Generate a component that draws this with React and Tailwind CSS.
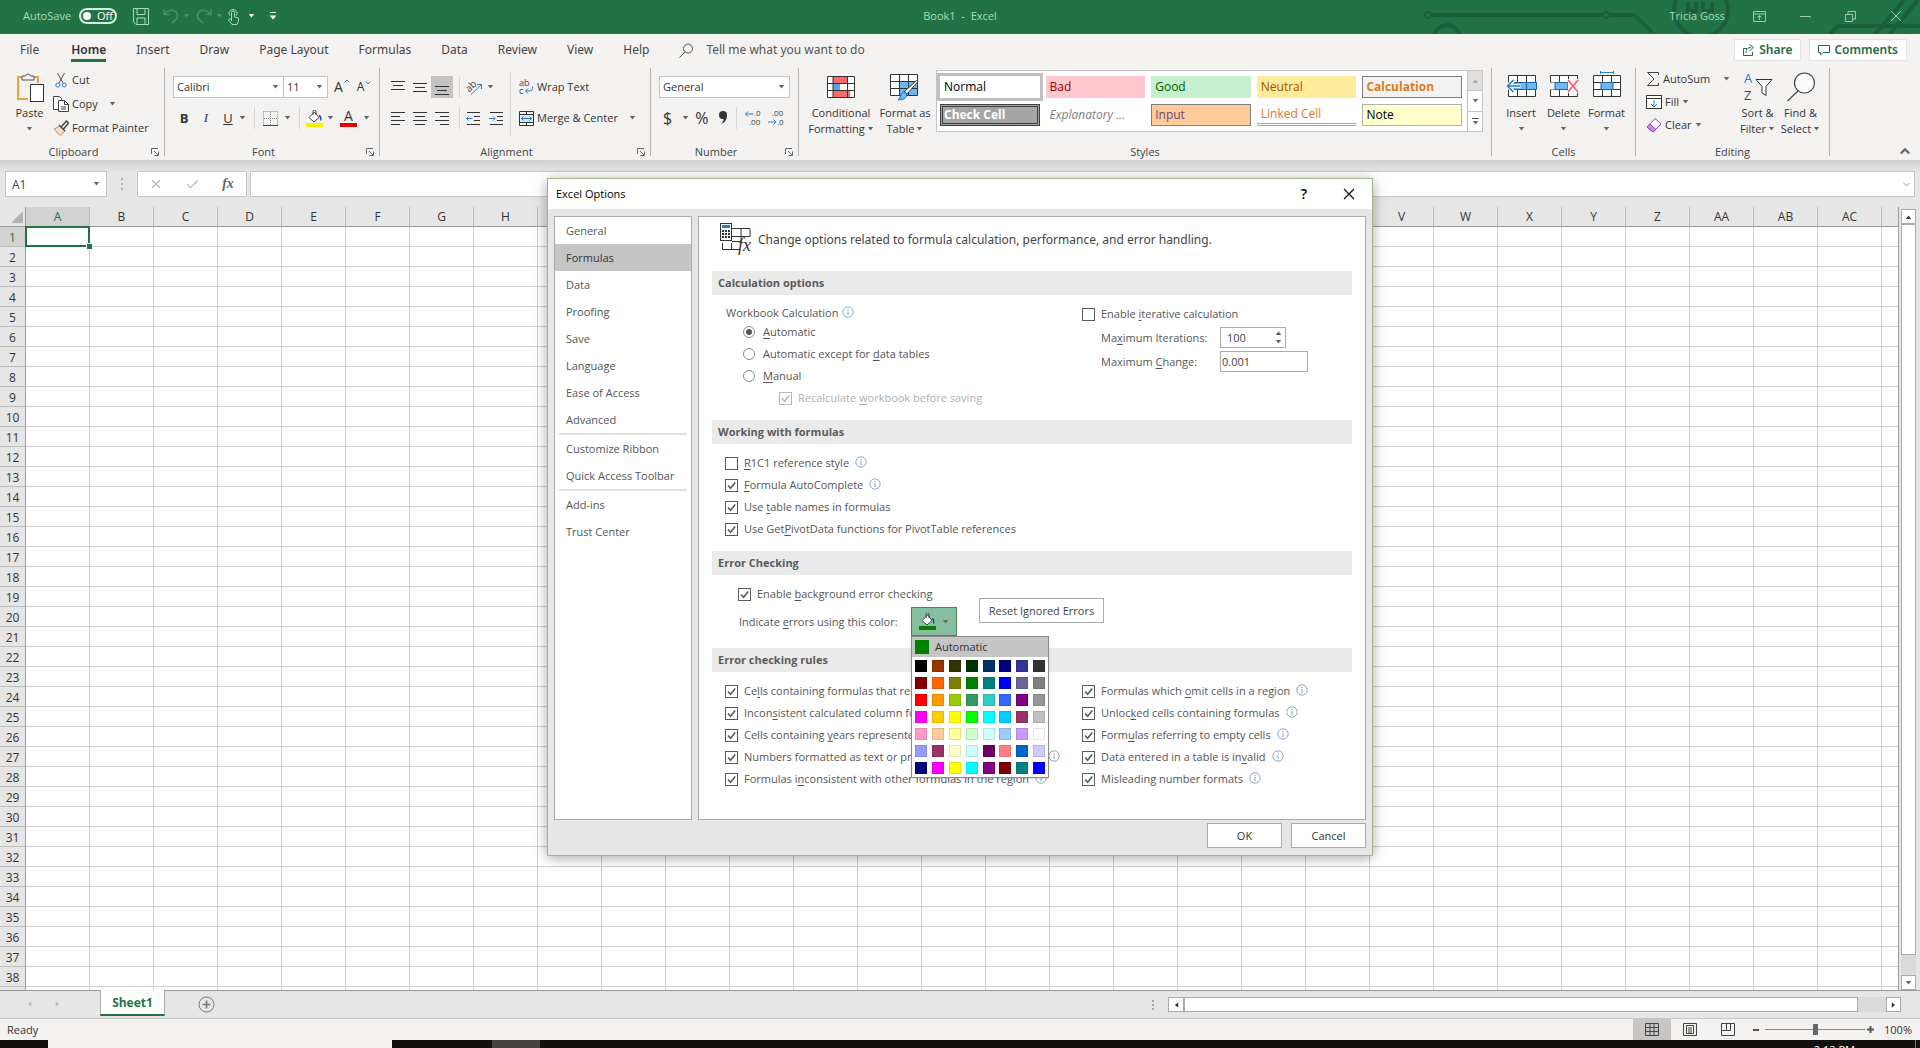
import React, { useState } from "react";
import { X, Check, ChevronUp, ChevronDown } from "lucide-react";

const columns = [
  "A", "B", "C", "D", "E", "F", "G", "H", "I", "J", "K", "L", "M", "N", "O",
  "P", "Q", "R", "S", "T", "U", "V", "W", "X", "Y", "Z", "AA", "AB", "AC",
];

const rows = Array.from({ length: 39 }, (_, i) => i + 1);

const tabs = ["File", "Home", "Insert", "Draw", "Page Layout", "Formulas", "Data", "Review", "View", "Help"];

const cellStyles = [
  { name: "Normal", cls: "pl-1 bg-white text-black outline-3 outline-[#c0c0c0]" },
  { name: "Bad", cls: "pl-1 bg-[#ffc7ce] text-[#9c0006]" },
  { name: "Good", cls: "pl-1 bg-[#c6efce] text-[#006100]" },
  { name: "Neutral", cls: "pl-1 bg-[#ffeb9c] text-[#9c5700]" },
  { name: "Calculation", cls: "pl-[3px] bg-[#f2f2f2] text-[#e07b1a] font-bold border border-[#7f7f7f]" },
  { name: "Check Cell", cls: "pl-px bg-[#a5a5a5] text-white font-bold border-3 border-double border-[#3f3f3f]" },
  { name: "Explanatory ...", cls: "pl-1 bg-white text-[#7f7f7f] italic" },
  { name: "Input", cls: "pl-[3px] bg-[#ffcc99] text-[#5f4a76] border border-[#7f7f7f]" },
  { name: "Linked Cell", cls: "pl-1 bg-white text-[#e07b1a] border-b-3 border-double border-[#f0962e]" },
  { name: "Note", cls: "pl-[3px] bg-[#ffffcc] text-black border border-[#b2b2b2]" },
];

const colors = [
  "#000000", "#993300", "#333300", "#003300", "#003366", "#000080", "#333399", "#333333",
  "#800000", "#ff6600", "#808000", "#008000", "#008080", "#0000ff", "#666699", "#808080",
  "#ff0000", "#ff9900", "#99cc00", "#339966", "#33cccc", "#3366ff", "#800080", "#969696",
  "#ff00ff", "#ffcc00", "#ffff00", "#00ff00", "#00ffff", "#00ccff", "#993366", "#c0c0c0",
  "#ff99cc", "#ffcc99", "#ffff99", "#ccffcc", "#ccffff", "#99ccff", "#cc99ff", "#ffffff",
  "#9999ff", "#993366", "#ffffcc", "#ccffff", "#660066", "#ff8080", "#0066cc", "#ccccff",
  "#000080", "#ff00ff", "#ffff00", "#00ffff", "#800080", "#800000", "#008080", "#0000ff",
];

/* ---------- small pieces ---------- */

const Caret = ({ className = "text-[#666]" }) => (
  <svg width="7" height="4" viewBox="0 0 7 4" className={`shrink-0 ${className}`}>
    <path d="M0.800 0h5.400L3.500 3.600z" fill="currentColor" />
  </svg>
);

const Info = () => (
  <svg width="12" height="12" viewBox="0 0 12 12" className="shrink-0 mb-0.5" fill="none" stroke="#7f9ccb">
    <circle cx="6" cy="6" r="5.2" strokeWidth="0.9" />
    <path d="M6 5v4M6 2.8v1.2" />
  </svg>
);

// "&" marks the access key, the letter after it gets the underline
const Label = ({ text }) => {
  const i = text.indexOf("&");
  if (i < 0) return <span>{text}</span>;
  return (
    <span className="whitespace-nowrap">
      {text.slice(0, i)}
      <span className="underline underline-offset-2">{text[i + 1]}</span>
      {text.slice(i + 2)}
    </span>
  );
};

const CheckRow = ({ text, checked = false, info, disabled }) => (
  <div className="flex items-center h-[22px] gap-1.5">
    <label className={`flex items-center gap-1.5 ${disabled ? "text-[#b0b0b0]" : ""}`}>
      <span className="relative flex">
        <input
          type="checkbox"
          defaultChecked={checked}
          disabled={disabled}
          className="peer appearance-none size-[13px] bg-white border border-[#5a5a5a] disabled:border-[#b8b8b8]"
        />
        <svg
          viewBox="0 0 13 13"
          className="absolute inset-0 size-[13px] pointer-events-none hidden peer-checked:block"
          fill="none"
          stroke={disabled ? "#b8b8b8" : "#5a5a5a"}
          strokeWidth="1.6"
        >
          <path d="M3 6.5l2.6 2.8L10.2 3.4" />
        </svg>
      </span>
      <Label text={text} />
    </label>
    {info && <Info />}
  </div>
);

const RadioRow = ({ text, checked = false }) => (
  <label className="flex items-center h-[22px] gap-2 pl-[17px]">
    <input
      type="radio"
      name="calc"
      defaultChecked={checked}
      className="appearance-none size-3 rounded-full border border-[#8a8a8a] p-[2px] bg-clip-content checked:bg-[#555]"
    />
    <Label text={text} />
  </label>
);

const SectionTitle = ({ children }) => (
  <h2 className="h-6 bg-[#eaeaea] pl-1.5 flex items-center font-bold text-[#5a5a5a]">{children}</h2>
);

const Sep = () => <div className="w-px h-[88px] bg-[#b4b2b0] shrink-0" />;

const Launcher = () => (
  <button aria-label="More options" className="text-[#666]">
    <svg width="8" height="8" viewBox="0 0 8 8" fill="none" stroke="currentColor">
      <path d="M0.5 6V0.5H7M3 3l4 4M7.5 3.5v4h-4" />
    </svg>
  </button>
);

const Group = ({ label, launcher, className, children }) => (
  <>
    <section className={`flex flex-col shrink-0 h-[92px] ${className}`}>
      <div className="h-[76px] flex">{children}</div>
      <div className="h-4 flex items-center text-[#444]">
        <span className="flex-1 text-center">{label}</span>
        {launcher && (
          <span className="w-[17px] flex items-center pl-1">
            <Launcher />
          </span>
        )}
      </div>
    </section>
    <Sep />
  </>
);

const BigButton = ({ icon, lines, caretBelow, className }) => (
  <button className={`flex flex-col items-center shrink-0 ${className}`}>
    <span className="h-[37px] flex items-center justify-center">{icon}</span>
    <span className="leading-4">{lines[0]}</span>
    <span className="h-4 flex items-center gap-0.5 leading-4">
      {!caretBelow && lines[1]}
      <Caret />
    </span>
  </button>
);

const Lines = ({ d, active }) => (
  <button className={`w-[22px] h-[22px] flex items-center justify-center ${active ? "bg-[#c5c3c1]" : ""}`}>
    <svg width="14" height="15" viewBox="0 0 14 15" stroke="#333" fill="none">
      <path d={d} />
    </svg>
  </button>
);

const Combo = ({ label, value, className }) => (
  <div className={`relative h-[22px] bg-white border border-[#c6c4c2] ${className}`}>
    <select aria-label={label} className="appearance-none w-full h-full pl-[3px] pr-3 outline-none">
      <option>{value}</option>
    </select>
    <span className="absolute right-1 inset-y-0 flex items-center pointer-events-none">
      <Caret />
    </span>
  </div>
);

/* ---------- icons ---------- */

const PasteIcon = () => (
  <svg width="28" height="30" viewBox="0 0 28 30" fill="none">
    <path d="M12 27H2V5h20v6" stroke="#e8a33d" strokeWidth="2" />
    <path d="M6 8V4h3.5a2.6 2.6 0 0 1 5 0H18v4z" fill="#f3f2f1" stroke="#555" />
    <rect x="14.500" y="12.500" width="13" height="17" fill="#fff" stroke="#333" />
  </svg>
);

const CutIcon = () => (
  <svg width="16" height="16" viewBox="0 0 16 16" fill="none">
    <path d="M4.500 1l5.500 10M11.500 1L6 11" stroke="#555" />
    <circle cx="4.800" cy="13" r="2" stroke="#2b7cd3" />
    <circle cx="11.200" cy="13" r="2" stroke="#2b7cd3" />
  </svg>
);

const CopyIcon = () => (
  <svg width="16" height="16" viewBox="0 0 16 16" fill="#fff" stroke="#444">
    <path d="M5.500 13.500h-5V.5h6l2 2V5" />
    <path d="M5.500 4.500h6l4 4v7h-10z" />
    <path d="M11.500 4.500v4h4M8 11h5M8 13h5" fill="none" />
  </svg>
);

const PainterIcon = () => (
  <svg width="16" height="16" viewBox="0 0 16 16" fill="none">
    <path d="M1 9l6-3 5 5-5 4.500C5 13 3 11 1 9z" fill="#fbe0c8" stroke="#e0803a" />
    <path d="M6 5l6 6M8 7l5.500-6 2 2L10.500 9" stroke="#444" strokeWidth="1.400" />
  </svg>
);

const BordersIcon = () => (
  <svg width="15" height="15" viewBox="0 0 15 15" fill="none" stroke="#888" strokeDasharray="1 1">
    <path d="M.5.5h14v14M.5.5v14M7.500 1v13M1 7.500h13" />
    <path d="M0 14.500h15" stroke="#444" strokeDasharray="none" />
  </svg>
);

const FillIcon = ({ color = "#ffee00" }) => (
  <svg width="17" height="17" viewBox="0 0 17 17" fill="none">
    <path d="M3 7.500L8.500 2l4.500 5.500L8 12z" fill="#fff" stroke="#444" />
    <path d="M7 5V1.500a1.500 1.500 0 0 1 3 0V5" stroke="#444" />
    <path d="M13 5.500c1.500.5 2 2.500 1.500 5" stroke="#1e4e9c" strokeWidth="1.500" />
    <rect y="13" width="17" height="4" fill={color} />
  </svg>
);

const OrientIcon = () => (
  <svg width="17" height="17" viewBox="0 0 17 17" fill="none" className="overflow-visible">
    <text x="0" y="10" fontSize="10" fill="#444" transform="rotate(-45 6 8)">ab</text>
    <path d="M5 15.500L15 6M11 5.500h4.500V10" stroke="#2b7cd3" />
  </svg>
);

const WrapIcon = () => (
  <svg width="15" height="16" viewBox="0 0 15 16" fill="none" className="overflow-visible">
    <text x="0" y="7" fontSize="9" fill="#444">ab</text>
    <text x="0" y="15" fontSize="9" fill="#444">c</text>
    <path d="M13.500 7.500v2a2.500 2.500 0 0 1-2.500 2.500H6.500M9 9.500L6.500 12 9 14.500" stroke="#2b7cd3" />
  </svg>
);

const MergeIcon = () => (
  <svg width="15" height="15" viewBox="0 0 15 15" fill="none">
    <path d="M.5.500h14v14H.500zM7.500.500v3M7.500 11.500v3M.500 3.500h14M.500 11.500h14" stroke="#333" />
    <rect x="1" y="4" width="13" height="7" fill="#d6ebff" />
    <path d="M2.500 7.500h10M4.500 5.500l-2 2 2 2M10.500 5.500l2 2-2 2" stroke="#1f6fc4" />
  </svg>
);

const IndentIcon = ({ flip }) => (
  <svg width="15" height="15" viewBox="0 0 15 15" fill="none">
    <path d="M1 1.500h13M8 5.500h6M8 9.500h6M1 13.500h13" stroke="#333" />
    <path d={flip ? "M0 7.500h6M4 5.500l2 2-2 2" : "M0.500 7.500h6M2.500 5.500l-2 2 2 2"} stroke="#2b7cd3" />
  </svg>
);

const DecimalIcon = ({ less }) => (
  <svg width="17" height="16" viewBox="0 0 17 16" fill="none" fontSize="8" className="overflow-visible">
    <text x={less ? "4" : "9"} y="6" fill="#444">{less ? ".00" : ".0"}</text>
    <text x={less ? "9" : "4"} y="15" fill="#444">{less ? ".0" : ".00"}</text>
    <path d={less ? "M0 12h8M5.500 9.500L8 12l-2.500 2.500" : "M0.500 4h8M3 1.500L.5 4 3 6.500"} stroke="#1f84c8" />
  </svg>
);

const CondIcon = () => (
  <svg width="28" height="24" viewBox="0 0 28 24" fill="none">
    <rect x=".5" y="1.500" width="27" height="21" fill="#fff" />
    <rect x="6" y="2" width="14" height="7" fill="#f8696b" />
    <rect x="6" y="9" width="7" height="7" fill="#5aa5ea" />
    <rect x="6" y="16" width="17" height="6" fill="#f8696b" />
    <path d="M.5 1.500h27v21H.5zM.5 8.500h27M.5 15.500h27M6 1.500v21M20.500 1.500v21" stroke="#333" />
  </svg>
);

const TableIcon = () => (
  <svg width="30" height="28" viewBox="0 0 30 28" fill="none">
    <rect x=".5" y="1.500" width="27" height="21" fill="#fff" />
    <rect x="9" y="9" width="18" height="14" fill="#6cb8f6" />
    <path d="M.5 1.500h27v21H.5zM.5 8.500h27M.5 15.500h27M9.500 1.500v21M18.500 1.500v21" stroke="#333" />
    <path d="M28 8.500L17 21l-3-2L26.500 7.500z" fill="#fff" stroke="#333" />
    <path d="M16.500 20.500c1 5-4 7-8.500 6 3-1 2-6 5.500-7.500z" fill="#6cb8f6" stroke="#1f6fc4" />
  </svg>
);

const CellsIcon = ({ kind }) => (
  <svg width="31" height="28" viewBox="0 0 31 28" fill="none" className="mb-1">
    <path d="M2.500 4.500h27v21h-27zM2.500 11.500h27M2.500 18.500h27M11.500 4.500v21M20.500 4.500v21" stroke="#333" fill="#fff" />
    {kind === "insert" && (
      <>
        <path d="M8 11.500h22.500v7H8zM20.500 11.500v7" fill="#6cb8f6" stroke="#1f5f9c" />
        <path d="M1.500 15h13M8 9l-6.500 6L8 21" stroke="#f3f2f1" strokeWidth="4" />
        <path d="M1 15h13M7.500 9L1.500 15l6 6" stroke="#1f84c8" strokeWidth="1.500" />
      </>
    )}
    {kind === "delete" && (
      <>
        <path d="M2 11.500h5v7H2z" fill="#f3f2f1" />
        <path d="M7 11.500h13v7H7z" fill="#6cb8f6" stroke="#1f5f9c" />
        <path d="M20 8h11v14H20z" fill="#f3f2f1" />
        <path d="M20 9l10 12M30 9L20 21" stroke="#f0606a" strokeWidth="1.500" />
      </>
    )}
    {kind === "format" && (
      <>
        <path d="M10 11.500h12v7H10z" fill="#6cb8f6" stroke="#1f5f9c" />
        <path d="M9 1.500h14M9.500 0v3M22.500 0v3" stroke="#1f84c8" />
      </>
    )}
  </svg>
);

const SigmaIcon = () => (
  <svg width="14" height="14" viewBox="0 0 14 14" fill="none" stroke="#444">
    <path d="M12.500 3V.5h-11L8 7l-6.500 6.500h11V11" />
  </svg>
);

const DownBoxIcon = () => (
  <svg width="16" height="14" viewBox="0 0 16 14" fill="none">
    <rect x=".5" y=".5" width="15" height="13" fill="#fff" stroke="#333" />
    <path d="M1 3.500h14" stroke="#333" />
    <path d="M8 5v6.500M5 9l3 3 3-3" stroke="#1f84c8" />
  </svg>
);

const EraserIcon = () => (
  <svg width="16" height="15" viewBox="0 0 16 15" fill="#fff" stroke="#8c3fa8">
    <path d="M1 9l8-8.500L15 6 7 14z" />
    <path d="M1 9l3-3 6 5.500L7 14z" fill="#d68be0" />
  </svg>
);

const SortIcon = () => (
  <svg width="30" height="28" viewBox="0 0 30 28" fill="none" className="overflow-visible">
    <text x="1" y="10" fontSize="13" fill="#2b7cd3">A</text>
    <text x="1" y="27" fontSize="13" fill="#444">Z</text>
    <path d="M13 6.500h16l-6 7v9l-4-2.500v-6.500z" stroke="#333" fill="#fff" />
  </svg>
);

const FindIcon = () => (
  <svg width="30" height="30" viewBox="0 0 30 30" fill="none" stroke="#444" strokeWidth="1.200">
    <circle cx="18.500" cy="11" r="10" fill="#fafafa" />
    <path d="M12 19L1.500 29" />
  </svg>
);

const CalcHeaderIcon = () => (
  <svg width="32" height="34" viewBox="0 0 32 34" fill="none" stroke="#333" className="overflow-visible">
    <path d="M12 5.500h18v8H12M21 5.500V18M12 18.500h9M2.500 20v6.500H20M11.500 20v6" />
    <rect x=".5" y=".5" width="11" height="17" fill="#fff" />
    <rect x="2" y="2" width="8" height="3" fill="#2b7cd3" stroke="none" />
    <path d="M2 8h2M5 8h2M8 8h2M2 11h2M5 11h2M8 11h2M2 14h2M5 14h2M8 14h2" strokeWidth="1.800" />
    <text x="18" y="28" fontSize="18" fontStyle="italic" fill="#333" stroke="none" className="font-['Liberation_Serif',serif]">fx</text>
  </svg>
);

/* ---------- page parts ---------- */

const TitleBar = () => (
  <header className="relative h-[34px] pb-0.5 shrink-0 bg-[#217346] text-[#a9dcbc] flex items-center justify-between">
    <svg width="500" height="34" viewBox="0 0 500 34" className="absolute right-0 top-0" fill="none" stroke="#1a5f39" strokeWidth="4">
      <circle cx="8" cy="15" r="3" strokeWidth="2" />
      <path d="M12 15h170" />
      <circle cx="186" cy="15" r="3" strokeWidth="2" />
      <path d="M190 15h24l18 17M410 34l8-8h82M455 34L484 0M470 34L498 0" />
      <circle cx="27" cy="38" r="13" />
      <circle cx="281" cy="10" r="27" />
      <path d="M268 2v9h8V2M283 2v9h9V2" />
    </svg>
    <div className="relative flex items-center pl-[23px]">
      <span>AutoSave</span>
      <button className="ml-2 w-[38px] h-4 rounded-full border-2 border-[#d5efdd] flex items-center gap-1.5 pl-0.5 text-white">
        <span className="size-2 rounded-full bg-white" />
        Off
      </button>
      <button aria-label="Save" className="ml-4">
        <svg width="16" height="17" viewBox="0 0 16 17" fill="none" stroke="#a9dcbc">
          <path d="M.5.5h15v16H3L.5 14zM4 .5v6h8v-6M4 16.500V10h8v6.500" />
        </svg>
      </button>
      <button aria-label="Undo" className="ml-3.5 flex items-center gap-1 text-[#439467]">
        <svg width="16" height="16" viewBox="0 0 16 16" fill="none" stroke="currentColor" strokeWidth="1.500">
          <path d="M1 1v5.500h5.500M1.500 6C5 1.500 12 1 14 5.500s-2 7-5 9.500" />
        </svg>
        <Caret className="text-[#439467]" />
      </button>
      <button aria-label="Redo" className="ml-1.5 flex items-center gap-1 text-[#439467]">
        <svg width="16" height="16" viewBox="0 0 16 16" fill="none" stroke="currentColor" strokeWidth="1.500">
          <path d="M15 1v5.500H9.500M14.500 6C11 1.500 4 1 2 5.500s2 7 5 9.500" />
        </svg>
        <Caret className="text-[#439467]" />
      </button>
      <button aria-label="Touch mode" className="ml-1 flex items-center gap-2">
        <svg width="13" height="17" viewBox="0 0 13 17" fill="none" stroke="#a9dcbc">
          <path d="M4.500 13V4.500a1.500 1.500 0 0 1 3 0V9l4 1v3l-1.500 3.500H5L1.500 12l1.500-1.500L4.500 12M2.500 7.500a4 4 0 1 1 7 0" />
        </svg>
        <Caret className="text-white" />
      </button>
      <button aria-label="Customize toolbar" className="ml-3.5">
        <svg width="8" height="8" viewBox="0 0 8 8">
          <path d="M1 .5h6" stroke="#fff" />
          <path d="M.5 3.500h7L4 7.500z" fill="#fff" />
        </svg>
      </button>
    </div>
    <h1 className="absolute inset-x-0 text-center pointer-events-none">Book1&nbsp; -&nbsp; Excel</h1>
    <div className="relative flex items-center pr-[18px]">
      <span className="mr-7">Tricia Goss</span>
      <div className="flex items-center gap-[34px] text-[#9cc9ad]">
        <button aria-label="Ribbon display options">
          <svg width="13" height="11" viewBox="0 0 13 11" fill="none" stroke="currentColor">
            <path d="M.5.500h12v10H.500zM.5 3h12M6.500 9V5M4.500 6.500l2-2 2 2" />
          </svg>
        </button>
        <button aria-label="Minimize">
          <svg width="11" height="11" viewBox="0 0 11 11" stroke="currentColor"><path d="M0 5.500h11" /></svg>
        </button>
        <button aria-label="Restore">
          <svg width="11" height="11" viewBox="0 0 11 11" fill="none" stroke="currentColor">
            <path d="M.5 3.500h7v7h-7zM3 3V.500h7.500V8H8" />
          </svg>
        </button>
        <button aria-label="Close">
          <svg width="12" height="12" viewBox="0 0 12 12" stroke="currentColor"><path d="M1 1l10 10M11 1L1 11" /></svg>
        </button>
      </div>
    </div>
  </header>
);

const TabBar = () => (
  <nav className="h-8 shrink-0 bg-[#f3f2f1] flex items-center pl-5 text-xs text-[#444] font-['Noto_Sans','Open_Sans',sans-serif]">
    <div className="flex items-center gap-[30px]">
      {tabs.map((t) => (
        <a
          key={t}
          href="#"
          className={`h-6 leading-6 first:mr-0.5 ${t === "Home" ? "font-semibold text-[#333] border-b-3 border-[#217346]" : ""}`}
        >
          {t}
        </a>
      ))}
    </div>
    <label className="flex items-center gap-3 ml-[30px] flex-1">
      <svg width="15" height="15" viewBox="0 0 15 15" fill="none" stroke="#555">
        <circle cx="9" cy="5.500" r="4.500" />
        <path d="M6 9L.5 14.500" />
      </svg>
      <input placeholder="Tell me what you want to do" className="flex-1 bg-transparent outline-none placeholder:text-[#555]" />
    </label>
    <div className="flex gap-2 pr-[13px] font-semibold text-[#1e6b42]">
      <button className="h-[22px] px-2 flex items-center gap-1 bg-white border border-[#e5e3e1]">
        <svg width="12" height="12" viewBox="0 0 12 12" fill="none" stroke="currentColor">
          <path d="M4 4.500H.5v7h9V8M3 9c0-4 2-5.500 5-5.500M6.500.500l4 3-4 3" />
        </svg>
        Share
      </button>
      <button className="h-[22px] px-2 flex items-center gap-1 bg-white border border-[#e5e3e1]">
        <svg width="12" height="11" viewBox="0 0 12 11" fill="none" stroke="currentColor">
          <path d="M.5.500h11v7H5l-2.500 2.500V7.500h-2z" />
        </svg>
        Comments
      </button>
    </div>
  </nav>
);

const Ribbon = () => (
  <div className="h-[94px] shrink-0 bg-[#f3f2f1] flex pt-0.5 overflow-hidden">
    <Group label="Clipboard" launcher className="w-[164px]">
      <BigButton icon={<PasteIcon />} lines={["Paste"]} caretBelow className="w-[47px] ml-1.5" />
      <div>
        <button className="flex items-center gap-[3px] h-6"><CutIcon />Cut</button>
        <button className="flex items-center gap-[3px] h-6"><CopyIcon />Copy<span className="pl-2"><Caret /></span></button>
        <button className="flex items-center gap-[3px] h-6 whitespace-nowrap"><PainterIcon />Format Painter</button>
      </div>
    </Group>

    <Group label="Font" launcher className="w-[214px]">
      <div className="pt-2 pl-2 flex flex-col gap-[9px]">
        <div className="flex items-center">
          <Combo label="Font" value="Calibri" className="w-[111px]" />
          <Combo label="Font size" value="11" className="w-11 border-l-0" />
          <button className="pl-1.5 text-sm flex">A<ChevronUp size={8} strokeWidth={3} className="text-[#2b7cd3]" /></button>
          <button className="pl-1.5 text-xs flex">A<ChevronDown size={8} strokeWidth={3} className="text-[#2b7cd3]" /></button>
        </div>
        <div className="flex items-center h-[22px]">
          <button className="w-[22px] text-[13px] font-bold">B</button>
          <button className="w-[22px] text-[13px] italic font-['Liberation_Serif',serif]">I</button>
          <button className="w-[22px] text-[13px] underline">U</button>
          <Caret />
          <div className="w-px h-[22px] bg-[#d8d6d4] ml-2 mr-2" />
          <button aria-label="Borders" className="flex items-center gap-1.5"><BordersIcon /><Caret /></button>
          <div className="w-px h-[22px] bg-[#d8d6d4] ml-2 mr-1.5" />
          <button aria-label="Fill color" className="flex items-center gap-1"><FillIcon /><Caret /></button>
          <button aria-label="Font color" className="flex items-center gap-1.5 ml-1.5">
            <span className="w-[17px] h-[17px] border-b-4 border-[#e00000] text-sm leading-3">A</span>
            <Caret />
          </button>
        </div>
      </div>
    </Group>

    <Group label="Alignment" launcher className="w-[270px]">
      <div className="pt-2 pl-[7px] flex flex-col gap-[9px]">
        <div className="flex items-center">
          <Lines d="M0 1.500h14M2 5.500h10M0 9.500h14" />
          <Lines d="M0 3.500h14M2 7.500h10M0 11.500h14" />
          <Lines active d="M0 6.500h14M2 10.500h10M0 14.500h14" />
          <div className="w-px h-[22px] bg-[#d8d6d4] mx-1.5" />
          <button aria-label="Orientation" className="flex items-center gap-1"><OrientIcon /><Caret /></button>
        </div>
        <div className="flex items-center">
          <Lines d="M0 1.500h14M0 5.500h9M0 9.500h14M0 13.500h9" />
          <Lines d="M0 1.500h14M2 5.500h10M0 9.500h14M2 13.500h10" />
          <Lines d="M0 1.500h14M5 5.500h9M0 9.500h14M5 13.500h9" />
          <div className="w-px h-[22px] bg-[#d8d6d4] mx-1.5" />
          <button aria-label="Decrease indent"><IndentIcon /></button>
          <button aria-label="Increase indent" className="ml-2"><IndentIcon flip /></button>
        </div>
      </div>
      <div className="w-px h-16 bg-[#d8d6d4] mt-1 ml-1.5 mr-2" />
      <div className="pt-2 flex flex-col gap-[9px] whitespace-nowrap">
        <button className="flex items-center gap-[3px] h-[22px]"><WrapIcon />Wrap Text</button>
        <button className="flex items-center gap-[3px] h-[22px]"><MergeIcon />Merge &amp; Center<span className="pl-2"><Caret /></span></button>
      </div>
    </Group>

    <Group label="Number" launcher className="w-[147px]">
      <div className="pt-2 pl-2 flex flex-col gap-[9px]">
        <Combo label="Number format" value="General" className="w-[131px]" />
        <div className="flex items-center h-[22px]">
          <button className="flex items-center gap-2.5 pl-1 text-base">$<Caret /></button>
          <button className="text-base pl-1.5">%</button>
          <button className="pl-2.5 text-[#333]" aria-label="Comma style">
            <svg width="10" height="14" viewBox="0 0 10 14" fill="currentColor">
              <path d="M1 4a4 4 0 0 1 8 0c0 5-2.500 8-6.500 9.500C4.500 12 5.500 10 5.500 8 2.500 8.500 1 6.500 1 4z" />
            </svg>
          </button>
          <div className="w-px h-[22px] bg-[#d8d6d4] ml-2 mr-2" />
          <button aria-label="Increase decimal"><DecimalIcon /></button>
          <button aria-label="Decrease decimal" className="ml-1.5"><DecimalIcon less /></button>
        </div>
      </div>
    </Group>

    <Group label="Styles" className="flex-1 min-w-0">
      <BigButton icon={<CondIcon />} lines={["Conditional", "Formatting"]} className="w-[66px] ml-[9px]" />
      <BigButton icon={<TableIcon />} lines={["Format as", "Table"]} className="w-[62px]" />
      <div className="h-[62px] mt-0.5 flex-1 mr-2 flex bg-white border border-[#c6c4c2] min-w-0">
        <div className="flex-1 grid grid-cols-5 gap-1.5 py-[5px] pl-[3px] pr-[5px]">
          {cellStyles.map((s) => (
            <button key={s.name} className={`h-[22px] text-left text-xs leading-4 truncate ${s.cls}`}>
              {s.name}
            </button>
          ))}
        </div>
        <div className="w-[15px] flex flex-col border-l border-[#c6c4c2]">
          <button aria-label="Scroll up" className="flex-1 flex items-center justify-center bg-[#e1dfdd]"><Caret className="rotate-180 text-[#aaa]" /></button>
          <button aria-label="Scroll down" className="flex-1 flex items-center justify-center border-y border-[#c6c4c2]"><Caret /></button>
          <button aria-label="More styles" className="flex-1 flex flex-col gap-0.5 items-center justify-center">
            <span className="w-[7px] h-px bg-[#555]" />
            <Caret />
          </button>
        </div>
      </div>
    </Group>

    <Group label="Cells" className="w-[143px]">
      <BigButton icon={<CellsIcon kind="insert" />} lines={["Insert"]} caretBelow className="w-[42px] ml-2" />
      <BigButton icon={<CellsIcon kind="delete" />} lines={["Delete"]} caretBelow className="w-[43px]" />
      <BigButton icon={<CellsIcon kind="format" />} lines={["Format"]} caretBelow className="w-[43px]" />
    </Group>

    <Group label="Editing" className="w-[193px]">
      <div className="pl-2.5 w-[100px] whitespace-nowrap">
        <button className="flex items-center gap-[3px] h-[22px]"><SigmaIcon />AutoSum<span className="pl-2.5"><Caret /></span></button>
        <button className="flex items-center gap-[3px] h-6"><DownBoxIcon />Fill<Caret /></button>
        <button className="flex items-center gap-[3px] h-[22px]"><EraserIcon />Clear<Caret /></button>
      </div>
      <BigButton icon={<SortIcon />} lines={["Sort &", "Filter"]} className="w-[43px]" />
      <BigButton icon={<FindIcon />} lines={["Find &", "Select"]} className="w-[43px]" />
    </Group>

    <div className="w-[90px] shrink-0 flex items-end justify-end pr-2 pb-0.5">
      <button aria-label="Collapse the ribbon"><ChevronUp size={14} strokeWidth={4} className="text-[#666]" /></button>
    </div>
  </div>
);

const FormulaBar = () => (
  <div className="h-[47px] shrink-0 bg-gradient-to-b from-[#cfcfcf] to-[#e6e6e6] to-25% flex pt-[11px] px-[5px] text-[#444]">
    <div className="relative w-[102px] h-[26px] bg-white border border-[#c6c6c6] text-xs">
      <input aria-label="Name box" defaultValue="A1" className="w-full h-full pl-1.5 outline-none" />
      <span className="absolute right-1.5 inset-y-0 flex items-center"><Caret /></span>
    </div>
    <div className="w-[30px] h-[26px] flex flex-col items-center justify-center gap-[3px]">
      <span className="size-0.5 bg-[#b0b0b0]" />
      <span className="size-0.5 bg-[#b0b0b0]" />
      <span className="size-0.5 bg-[#b0b0b0]" />
    </div>
    <div className="w-[110px] h-[26px] bg-white border border-[#c6c6c6] grid grid-cols-3 place-items-center">
      <button aria-label="Cancel entry"><X size={14} className="text-[#b8b8b8]" /></button>
      <button aria-label="Enter"><Check size={15} className="text-[#b8b8b8]" /></button>
      <button aria-label="Insert function" className="italic text-sm font-bold text-[#666] font-['Liberation_Serif',serif]">fx</button>
    </div>
    <div className="flex-1 h-[26px] ml-[3px] bg-white border border-[#c6c6c6] flex items-center pr-0.5">
      <input aria-label="Formula bar" className="flex-1 h-full outline-none" />
      <ChevronDown size={11} className="text-[#888]" />
    </div>
  </div>
);

const Sheet = () => (
  <div className="flex-1 min-h-0 flex bg-[#e6e6e6]">
    <div className="flex-1 min-w-0 overflow-hidden border-r border-[#9a9a9a]">
      <table className="w-full table-fixed border-separate border-spacing-0 text-xs text-[#333] bg-white">
        <thead>
          <tr className="h-5 bg-[#e6e6e6]">
            <th className="w-[26px] p-0 border-r border-b border-[#9a9a9a]">
              <svg width="12" height="12" viewBox="0 0 12 12" className="ml-auto mr-0.5"><path d="M12 0v12H0z" fill="#b4b4b4" /></svg>
            </th>
            {columns.map((c) => (
              <th
                key={c}
                className={`w-16 p-0 leading-4 font-normal border-r border-b border-r-[#bdbdbd] ${c === "A" ? "bg-[#d2d2d2] text-[#217346] border-b-[#217346]" : "border-b-[#9a9a9a]"}`}
              >
                {c}
              </th>
            ))}
            <th className="p-0 border-b border-[#9a9a9a]" />
          </tr>
        </thead>
        <tbody>
          {rows.map((r) => (
            <tr key={r} className="h-5">
              <th className={`p-0 pt-0.5 leading-4 font-normal border-r border-b border-r-[#9a9a9a] border-b-[#bdbdbd] ${r === 1 ? "bg-[#d2d2d2] text-[#217346]" : "bg-[#e6e6e6]"}`}>
                {r}
              </th>
              {columns.map((c) => (
                <td key={c} className="relative p-0 border-r border-b border-[#d0d0d0]">
                  {r === 1 && c === "A" && (
                    <span className="absolute z-10 -inset-px border-2 border-[#217346]">
                      <span className="absolute -right-1 -bottom-1 size-[5px] bg-[#217346] outline outline-white" />
                    </span>
                  )}
                </td>
              ))}
              <td className="p-0 border-b border-[#d0d0d0]" />
            </tr>
          ))}
        </tbody>
      </table>
    </div>
    <div className="w-[21px] shrink-0 pl-0.5 pr-1 pt-0.5 flex flex-col">
      <button aria-label="Scroll up" className="h-[15px] bg-white border border-[#ababab] flex items-center justify-center"><Caret className="rotate-180" /></button>
      <div className="flex-1 pb-5 bg-[#dadada] flex">
        <div className="flex-1 bg-white border border-[#ababab]" />
      </div>
      <button aria-label="Scroll down" className="h-[15px] bg-white border border-[#ababab] flex items-center justify-center"><Caret /></button>
    </div>
  </div>
);

const SheetTabs = () => (
  <div className="h-7 shrink-0 bg-[#e6e6e6] border-t border-[#9a9a9a] flex items-start">
    <div className="w-[100px] flex items-center h-[26px] gap-[21px] pl-[26px]">
      <Caret className="rotate-90 text-[#bbb]" />
      <Caret className="-rotate-90 text-[#bbb]" />
    </div>
    <button className="w-[65px] h-[26px] -mt-px pt-0.5 bg-white border-x border-x-[#ababab] border-b-2 border-b-[#217346] text-xs font-bold text-[#217346]">
      Sheet1
    </button>
    <button aria-label="New sheet" className="ml-[33px] mt-[5px]">
      <svg width="17" height="17" viewBox="0 0 17 17" fill="none" stroke="#777">
        <circle cx="8.500" cy="8.500" r="7.500" />
        <path d="M8.500 4.500v8M4.500 8.500h8" strokeWidth="1.600" />
      </svg>
    </button>
    <div className="flex-1" />
    <div className="w-[39%] h-[15px] mt-1.5 mr-[19px] flex items-center">
      <div className="w-4 flex flex-col gap-0.5">
        <span className="size-0.5 bg-[#aaa]" />
        <span className="size-0.5 bg-[#aaa]" />
        <span className="size-0.5 bg-[#aaa]" />
      </div>
      <button aria-label="Scroll left" className="w-4 h-full bg-white border border-[#ababab] flex items-center justify-center"><Caret className="rotate-90" /></button>
      <div className="flex-1 h-full bg-[#dadada] pr-7 flex"><div className="flex-1 bg-white border border-[#ababab]" /></div>
      <button aria-label="Scroll right" className="w-[15px] h-full bg-white border border-[#ababab] flex items-center justify-center"><Caret className="-rotate-90" /></button>
    </div>
  </div>
);

const StatusBar = () => (
  <footer className="h-[22px] shrink-0 bg-[#f3f2f1] border-t border-[#c6c6c6] flex items-center pl-[7px] pr-2">
    <span className="flex-1">Ready</span>
    <button aria-label="Normal view" className="w-[38px] h-full bg-[#c8c6c4] flex items-center justify-center">
      <svg width="14" height="13" viewBox="0 0 14 13" fill="none" stroke="#444"><path d="M.5.500h13v12H.500zM.5 4.500h13M.5 8.500h13M5 .5v12M9 .5v12" /></svg>
    </button>
    <button aria-label="Page layout view" className="w-[38px] flex justify-center">
      <svg width="14" height="13" viewBox="0 0 14 13" fill="none" stroke="#444"><path d="M.5.500h13v12H.500zM3.500 2.500h7v8h-7zM5 5h4M5 7h4M5 9h4" /></svg>
    </button>
    <button aria-label="Page break preview" className="w-[38px] flex justify-center">
      <svg width="14" height="13" viewBox="0 0 14 13" fill="none" stroke="#444"><path d="M.5.500h13v12H.500zM5.500.5v7h-5M9.500.5v7h-4" /></svg>
    </button>
    <button aria-label="Zoom out" className="ml-1.5 w-1.5 h-0.5 bg-[#555]" />
    <input
      type="range"
      aria-label="Zoom"
      defaultValue="50"
      className="appearance-none w-[100px] h-px ml-1.5 mr-0.5 bg-[#8a8a8a] [&::-webkit-slider-thumb]:appearance-none [&::-webkit-slider-thumb]:w-[5px] [&::-webkit-slider-thumb]:h-[11px] [&::-webkit-slider-thumb]:bg-[#666]"
    />
    <button aria-label="Zoom in" className="text-[#555]">
      <svg width="7" height="7" viewBox="0 0 7 7" stroke="currentColor" strokeWidth="2"><path d="M0 3.500h7M3.500 0v7" /></svg>
    </button>
    <span className="ml-2.5">100%</span>
  </footer>
);

const Taskbar = () => (
  <div className="h-2 shrink-0 bg-[#12110d] flex overflow-hidden text-white">
    <div className="w-12" />
    <div className="w-[344px] bg-[#f3f2f1]" />
    <div className="w-[100px]" />
    <div className="w-12 bg-[#454341]" />
    <div className="flex-1" />
    <span className="pt-0.5 mr-[60px] leading-4">2:13 PM</span>
    <div className="w-px bg-[#777] mr-1" />
  </div>
);

/* ---------- options dialog ---------- */

const navGroups = [
  ["General", "Formulas", "Data", "Proofing", "Save", "Language", "Ease of Access", "Advanced"],
  ["Customize Ribbon", "Quick Access Toolbar"],
  ["Add-ins", "Trust Center"],
];

const ColorPicker = () => {
  const [open, setOpen] = useState(true);
  const [color, setColor] = useState("#008000");

  return (
    <div className="relative">
      <button
        aria-label="Error color"
        onClick={() => setOpen(!open)}
        className="w-[46px] h-[29px] bg-[#86bfa0] border border-[#4f8065] flex items-center justify-center gap-1.5"
      >
        <FillIcon color={color} />
        <Caret />
      </button>
      {open && (
        <div className="absolute z-10 left-0 top-[29px] w-[138px] bg-white border border-[#8a8a8a] shadow-sm">
          <button onClick={() => setColor("#008000")} className="w-full h-5 flex items-center gap-1.5 pl-[3px] bg-[#c5c5c5] text-[#333]">
            <span className="size-3.5 bg-[#008000]" />
            Automatic
          </button>
          <div className="grid grid-cols-8 gap-[5px] p-[3px]">
            {colors.map((c, i) => (
              <button
                key={i}
                aria-label={c}
                onClick={() => setColor(c)}
                className="size-3 border border-black/10"
                style={{ backgroundColor: c }}
              />
            ))}
          </div>
        </div>
      )}
    </div>
  );
};

const OptionsDialog = () => (
  <div className="absolute inset-0 flex items-start justify-center pt-[178px]">
    <div role="dialog" aria-label="Excel Options" className="w-[826px] bg-[#e6e6e6] border border-[#a3b584] shadow-[0_2px_12px_rgba(0,0,0,0.35)] text-[#555]">
      <div className="h-[30px] bg-white flex items-center pl-2 pr-[17px] text-black">
        <span className="flex-1">Excel Options</span>
        <button className="text-sm font-semibold mr-9">?</button>
        <button aria-label="Close">
          <svg width="12" height="12" viewBox="0 0 12 12" stroke="#111" strokeWidth="1.200"><path d="M1 1l10 10M11 1L1 11" /></svg>
        </button>
      </div>

      <div className="flex gap-1.5 px-1.5 pt-[7px]">
        {/* categories */}
        <div className="w-[138px] shrink-0 bg-white border border-[#ababab]">
          {navGroups.map((g, i) => (
            <div key={i} className={i > 0 ? "border-t-2 border-[#e1e1e1] mx-1" : ""}>
              {g.map((n) => (
                <button
                  key={n}
                  className={`block w-full h-[27px] text-left whitespace-nowrap ${i > 0 ? "pl-[7px]" : "pl-[11px]"} ${n === "Formulas" ? "bg-[#c5c5c5] text-[#333]" : ""}`}
                >
                  {n}
                </button>
              ))}
            </div>
          ))}
        </div>

        {/* options */}
        <div className="flex-1 bg-white border border-[#ababab] px-[13px] pb-[29px]">
          <div className="h-[54px] pb-2 pl-2 flex items-center gap-1.5 text-xs text-[#444] whitespace-nowrap font-['Noto_Sans','Open_Sans',sans-serif]">
            <CalcHeaderIcon />
            Change options related to formula calculation, performance, and error handling.
          </div>

          <SectionTitle>Calculation options</SectionTitle>
          <div className="grid grid-cols-[370px_1fr] pb-[11px]">
            <fieldset className="pt-2.5 pl-3.5">
              <legend className="sr-only">Workbook Calculation</legend>
              <div className="flex items-center h-4 gap-1">Workbook Calculation<Info /></div>
              <RadioRow text="&Automatic" checked />
              <RadioRow text="Automatic except for &data tables" />
              <RadioRow text="&Manual" />
              <div className="pl-[53px]">
                <CheckRow text="Recalculate &workbook before saving" checked disabled />
              </div>
            </fieldset>
            <div className="pt-2">
              <CheckRow text="Enable &iterative calculation" />
              <div className="mt-0.5 pl-[19px] grid grid-cols-[119px_88px] gap-y-[3px] items-center">
                <label htmlFor="iterations"><Label text="Ma&ximum Iterations:" /></label>
                <div className="relative w-[66px]">
                  <input id="iterations" defaultValue="100" className="w-full h-[21px] pl-1.5 border border-[#ababab] outline-none text-[#444]" />
                  <span className="absolute right-1 inset-y-0 flex flex-col justify-center gap-[5px]">
                    <Caret className="rotate-180" />
                    <Caret />
                  </span>
                </div>
                <label htmlFor="change"><Label text="Maximum &Change:" /></label>
                <input id="change" defaultValue="0.001" className="w-full h-[21px] pl-px border border-[#ababab] outline-none text-[#444]" />
              </div>
            </div>
          </div>

          <SectionTitle>Working with formulas</SectionTitle>
          <div className="pt-2 pb-[11px] pl-[13px]">
            <CheckRow text="&R1C1 reference style" info />
            <CheckRow text="&Formula AutoComplete" checked info />
            <CheckRow text="Use &table names in formulas" checked />
            <CheckRow text="Use Get&PivotData functions for PivotTable references" checked />
          </div>

          <SectionTitle>Error Checking</SectionTitle>
          <div className="flex items-start gap-[22px] pt-2 pb-3 pl-[26px]">
            <div className="w-[219px]">
              <CheckRow text="Enable &background error checking" checked />
              <div className="flex items-center justify-between mt-0.5 pl-px">
                <Label text="Indicate &errors using this color:" />
                <ColorPicker />
              </div>
            </div>
            <button className="mt-[15px] h-[25px] w-[125px] border border-[#ababab] text-[#444] bg-white">
              <Label text="Reset I&gnored Errors" />
            </button>
          </div>

          <SectionTitle>Error checking rules</SectionTitle>
          <div className="grid grid-cols-[370px_1fr] pt-2">
            <div className="pl-[13px]">
              <CheckRow text="Ce&lls containing formulas that result in an error" checked info />
              <CheckRow text="Incon&sistent calculated column formula in tables" checked info />
              <CheckRow text="Cells containing &years represented as 2 digits" checked info />
              <CheckRow text="Numbers formatted as text or preceded by an apostrop&he" checked info />
              <CheckRow text="Formulas i&nconsistent with other formulas in the region" checked info />
            </div>
            <div>
              <CheckRow text="Formulas which &omit cells in a region" checked info />
              <CheckRow text="Unloc&ked cells containing formulas" checked info />
              <CheckRow text="Form&ulas referring to empty cells" checked info />
              <CheckRow text="Data entered in a table is in&valid" checked info />
              <CheckRow text="Misleading number formats" checked info />
            </div>
          </div>
        </div>
      </div>

      <div className="flex justify-end gap-[9px] px-1.5 pt-[3px] pb-[7px] text-[#333]">
        <button className="w-[75px] h-[25px] bg-white border border-[#ababab]">OK</button>
        <button className="w-[75px] h-[25px] bg-white border border-[#ababab]">Cancel</button>
      </div>
    </div>
  </div>
);

export default function App() {
  return (
    <div className="relative h-screen flex flex-col overflow-hidden bg-[#e6e6e6] text-[11px] leading-4 text-[#333] font-['Open_Sans','Noto_Sans',sans-serif]">
      <TitleBar />
      <TabBar />
      <Ribbon />
      <FormulaBar />
      <Sheet />
      <SheetTabs />
      <StatusBar />
      <Taskbar />
      <OptionsDialog />
    </div>
  );
}
